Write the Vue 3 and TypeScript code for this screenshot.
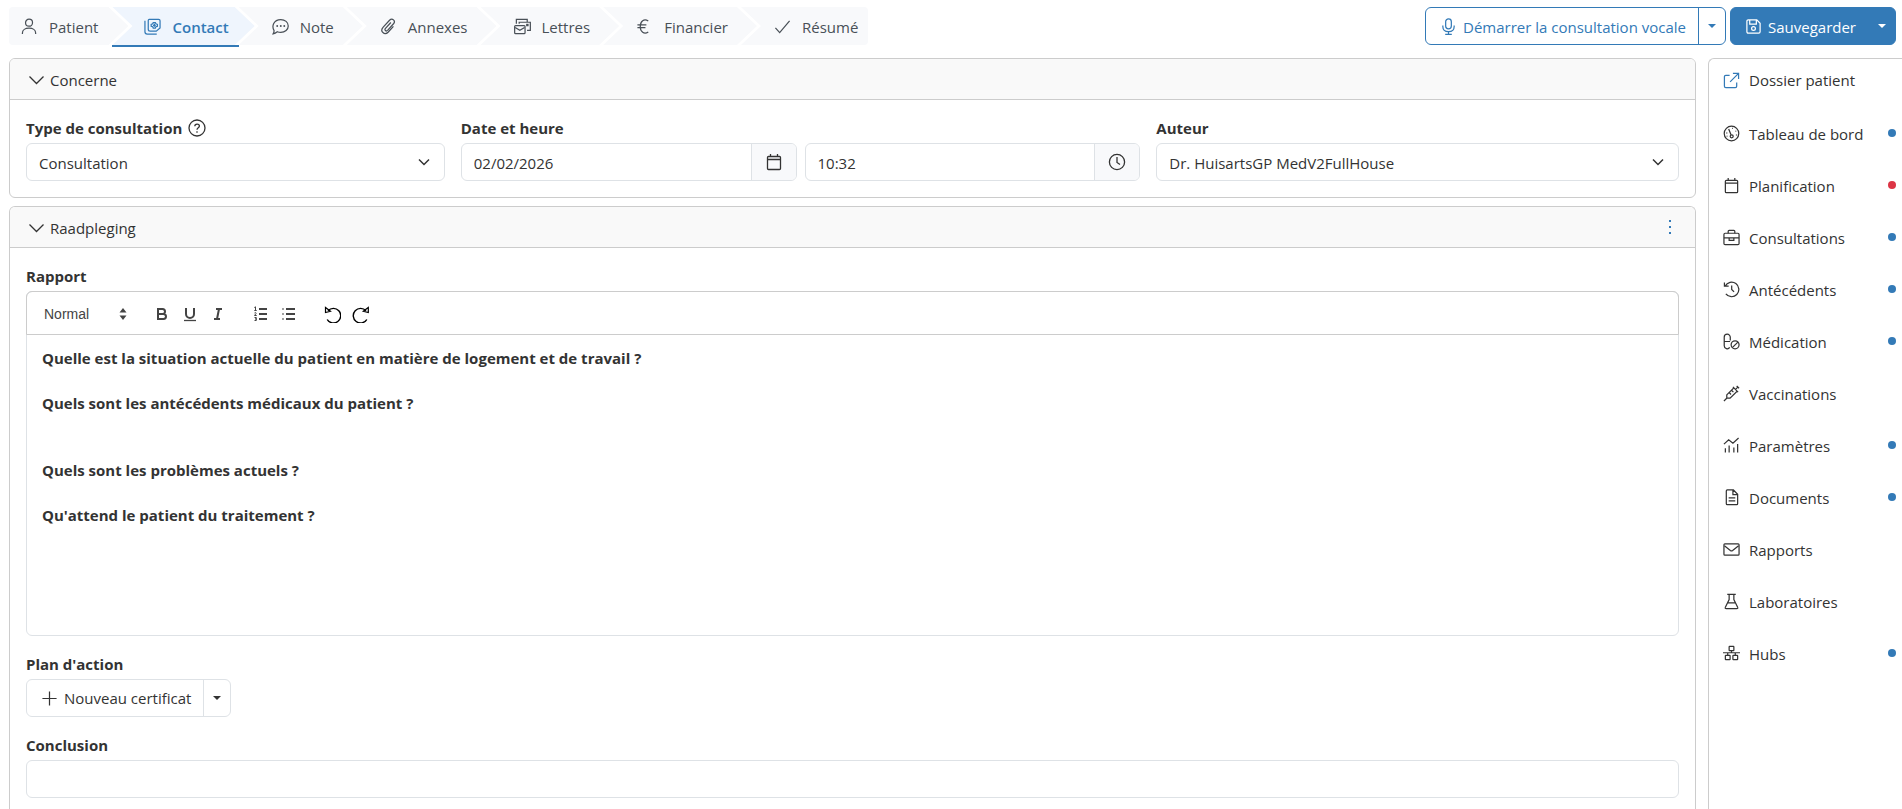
<script setup lang="ts">
import { ref } from 'vue'

interface Step { label: string; icon: string; active?: boolean }
interface SideItem { label: string; icon: string; dot?: 'blue' | 'red' }

// Icon bodies share an 18x18 grid and are drawn with the current text colour.
const icons: Record<string, string> = {
  person: '<circle cx="8.5" cy="5" r="3.7"/><path d="M1.5 17v-1.2c0-3 3-5 7-5s7 2 7 5V17"/>',
  contact: '<path d="M1 3v11.500q0 2.500 2.500 2.500h10"/><path d="M5.500 1.500h10q1.500 0 1.500 1.500v7.500l-4 3.500H6.500q-2 0-2-2V3q0-1.500 1-1.500z"/><path d="M9.800 4.800h2.200l.6 1.400 1.600.5v2l-1.600.5-.6 1.400H9.800l-.6-1.400-1.600-.5v-2l1.600-.5zM9.500 7.700h3M11 6.200v3"/>',
  chat: '<path d="M1.200 16.700c.8-1.200 1-2.300 1-3.300C-.5 9 1.500 1.600 9.300 1.600c4.500 0 7.900 3 7.900 6.800s-3.400 6.900-7.900 6.900c-1.400 0-2.600-.2-3.700-.7-1.100.9-2.500 1.800-4.400 2.100z"/><g fill="currentColor" stroke="none"><circle cx="5.500" cy="8.500" r="1"/><circle cx="9.300" cy="8.500" r="1"/><circle cx="13" cy="8.500" r="1"/></g>',
  clip: '<path d="M11.500 4.800 5.800 11c-1.500 1.700.6 3.700 2.200 2.100l6.300-7c2.700-3.200-1.400-6.600-4.200-3.700L3.400 9.600c-4 4.500 1.400 9.300 5.400 5.200l5.400-6"/>',
  letters: '<rect x="0.7" y="8" width="11" height="8.500" rx="1"/><path d="m1.200 10 5 3 5-3"/><path d="M2.500 6V1.500h11.500V4M5.500 6V4.500h11.800v8.500h-3.500"/><rect x="13.500" y="6.800" width="1.300" height="1.300"/>',
  euro: '<path d="M13 3.200C8.500.3 4.500 3.500 4.500 9s4 8.700 8.500 5.800M1.500 7.300H11M1.500 10.300h8.500"/>',
  check: '<path d="m1.500 10.500 4.500 5L16.500 3"/>',
  mic: '<rect x="6" y="1" width="6" height="10.500" rx="3"/><path d="M3 8v1c0 3.500 2.500 5.500 6 5.500s6-2 6-5.500V8M9 14.500v2.800M5.500 17.300h7"/>',
  save: '<path d="M3.500 2h9L16 5.500v9q0 1.500-1.500 1.500h-11Q2 16 2 14.500v-11Q2 2 3.500 2z"/><path d="M5 2v4.500h7V2"/><circle cx="9" cy="11.200" r="2"/>',
  chevron: '<path d="m1.500 6.500 7 7 7-7"/>',
  help: '<circle cx="9" cy="9" r="8"/><path d="M6.800 7.300c0-3 4.600-2.800 4.600-.2 0 1.800-2.400 1.700-2.400 3.700M9 12.200v1.500"/>',
  calendar: '<path d="M3.500 3.500h11q1 0 1 1v11q0 1-1 1h-11q-1 0-1-1v-11q0-1 1-1zM2.500 6.500h13M5.500 1v2.500M12.500 1v2.500"/>',
  clock: '<circle cx="9" cy="9" r="7.600"/><path d="M9 4v5.500l3 2"/>',
  external: '<path d="M7 3.500H3q-1.500 0-1.500 1.500v10q0 1.500 1.500 1.500h10q1.500 0 1.500-1.500v-4M7.500 10.500l9-9M10.500 1.500h6v6"/>',
  gauge: '<circle cx="9" cy="9" r="7.700"/><circle cx="9.200" cy="12" r="1.600"/><path d="m8.500 10.300-2.500-6M9.800 3.500h.8M13.500 6v1M14.300 10v1M4 8v1M4.300 11.500v.8"/>',
  briefcase: '<rect x="1" y="4.500" width="16" height="12" rx="1.200"/><path d="M5.500 4.500V2.500q0-1 1-1h5q1 0 1 1v2M1 9.500h5.500M11.500 9.500H17M6.500 9.500h5V12h-5z"/>',
  history: '<path d="M2.300 5.300A7.700 7.700 0 1 1 3 13.700M1.500 1.500v4h4.500M9.200 4.800V9l2.500 2.500"/>',
  pills: '<path d="M7.700 8V4.500a3.200 3.200 0 0 0-6.400 0v9c0 3.300 4.200 4.200 5.800 1.800M1.300 9h6.200"/><circle cx="12.800" cy="12.500" r="4.200"/><path d="m15.800 9.600-6 5.900"/>',
  syringe: '<path d="m1 17 3.200-3.200M4 10.500l7.500-7.500 3.500 3.500L7.500 14H4zM10.500 2l5.500 5.500M13.300 4.700l2.700-2.700M14.500 1l2.500 2.500M9 5.500l2 2M6.500 8l2 2"/>',
  chart: '<path d="M2.500 16.500V12M6.500 16.500V9M11.500 16.500V11M15.500 16.500V7.500M1 7.500l5-4.500 4.500 3.500L16.500 1"/>',
  document: '<path d="M4.500 1h6.500l4.500 4.500v10q0 1-1 1h-10q-1 0-1-1v-13.500q0-1 1-1zM10.500 1v5h5M6 9.500h7M6 12.500h7"/>',
  mail: '<rect x="1" y="3" width="16" height="12" rx="1"/><path d="m1.500 5 6.300 5q1.200.9 2.400 0l6.300-5"/>',
  flask: '<path d="M4.500 1.500h9M6.500 1.500V7l-4 8q-.8 1.500 1 1.500h11q1.800 0 1-1.500l-4-8V1.500M5 10.500h8"/>',
  hub: '<rect x="6.500" y="1.500" width="5" height="4.500" rx=".5"/><path d="M0 8.200h18M9 6v2M5 8v2.500M13 8v2.500"/><rect x="2.500" y="11" width="5" height="4.500" rx=".5"/><rect x="10.500" y="11" width="5" height="4.500" rx=".5"/>',
  plus: '<path d="M9 1.500v15M1.500 9h15"/>',
  dots: '<g fill="currentColor" stroke="none"><rect x="8" y="2" width="2" height="2"/><rect x="8" y="8" width="2" height="2"/><rect x="8" y="14" width="2" height="2"/></g>',
  bold: '<g stroke-width="2"><path d="M5 4h4.500a2.500 2.500 0 0 1 0 5H5zM5 9h5.500a2.500 2.500 0 0 1 0 5H5z"/></g>',
  underline: '<path stroke-width="2" d="M5 3v6a4 4 0 0 0 8 0V3"/><path d="M3 15.500h12"/>',
  italic: '<path stroke-width="2" d="M7 4h6M5 14h6M8 14l2-10"/>',
  ordered: '<path stroke-width="2" d="M7 4h8M7 9h8M7 14h8"/><path stroke-width="1" d="m2.300 2.500 1.200-.700v3.700M2.300 5.500h2.400M2.500 8c.8-.9 2-.3 1.500.6L2.500 10.500h2.200M2.500 12.500h1.800v1.400h-1 1v1.600H2.500"/>',
  bullet: '<path stroke-width="2" d="M6 4h9M6 9h9M6 14h9M2.500 4h1M2.500 9h1M2.500 14h1"/>',
  undo: '<path stroke-width="1.400" d="M5 5.800A7.300 7.300 0 1 1 4.200 14.500"/><path d="M2.500 2.500v5l5-1.200z" stroke-width="1.200"/>',
  redo: '<path stroke-width="1.400" d="M15 5.800A7.300 7.300 0 1 0 15.800 14.500"/><path d="M17.300 2.500v5l-5-1.200z" stroke-width="1.200"/>',
  sort: '<path fill="currentColor" stroke="none" d="M5.500 7.500h7L9 3zM5.500 10.500h7L9 15z"/>',
}

const steps: Step[] = [
  { label: 'Patient', icon: 'person' },
  { label: 'Contact', icon: 'contact', active: true },
  { label: 'Note', icon: 'chat' },
  { label: 'Annexes', icon: 'clip' },
  { label: 'Lettres', icon: 'letters' },
  { label: 'Financier', icon: 'euro' },
  { label: 'Résumé', icon: 'check' },
]

const sideItems: SideItem[] = [
  { label: 'Tableau de bord', icon: 'gauge', dot: 'blue' },
  { label: 'Planification', icon: 'calendar', dot: 'red' },
  { label: 'Consultations', icon: 'briefcase', dot: 'blue' },
  { label: 'Antécédents', icon: 'history', dot: 'blue' },
  { label: 'Médication', icon: 'pills', dot: 'blue' },
  { label: 'Vaccinations', icon: 'syringe' },
  { label: 'Paramètres', icon: 'chart', dot: 'blue' },
  { label: 'Documents', icon: 'document', dot: 'blue' },
  { label: 'Rapports', icon: 'mail' },
  { label: 'Laboratoires', icon: 'flask' },
  { label: 'Hubs', icon: 'hub', dot: 'blue' },
]

const toolGroups = [
  [
    { icon: 'bold', label: 'Gras' },
    { icon: 'underline', label: 'Souligné' },
    { icon: 'italic', label: 'Italique' },
  ],
  [
    { icon: 'ordered', label: 'Liste numérotée' },
    { icon: 'bullet', label: 'Liste à puces' },
  ],
  [
    { icon: 'undo', label: 'Annuler' },
    { icon: 'redo', label: 'Rétablir' },
  ],
]

const date = ref('02/02/2026')
const time = ref('10:32')
const conclusion = ref('')
</script>

<template>
  <div class="page">
    <header class="topbar">
      <nav aria-label="Étapes">
        <ol class="steps">
          <li v-for="s in steps" :key="s.label" class="step" :class="{ active: s.active }">
            <a href="#" :aria-current="s.active ? 'step' : undefined">
              <svg class="icon" viewBox="0 0 18 18" aria-hidden="true" v-html="icons[s.icon]"></svg>
              <span class="caption">{{ s.label }}</span>
            </a>
          </li>
        </ol>
      </nav>
      <div class="actions">
        <div class="split outline">
          <button type="button" class="main">
            <svg class="icon" viewBox="0 0 18 18" aria-hidden="true" v-html="icons.mic"></svg>
            <span class="caption">Démarrer la consultation vocale</span>
          </button>
          <button type="button" class="more" aria-label="Options vocales"><span class="caret"></span></button>
        </div>
        <div class="split solid">
          <button type="button" class="main">
            <svg class="icon" viewBox="0 0 18 18" aria-hidden="true" v-html="icons.save"></svg>
            <span class="caption">Sauvegarder</span>
          </button>
          <button type="button" class="more" aria-label="Options de sauvegarde"><span class="caret"></span></button>
        </div>
      </div>
    </header>

    <div class="body">
      <main class="content">
        <section class="card">
          <div class="card-head">
            <button type="button" class="toggle" aria-expanded="true">
              <svg class="icon" viewBox="0 0 18 18" aria-hidden="true" v-html="icons.chevron"></svg>
              <span class="caption">Concerne</span>
            </button>
          </div>
          <div class="card-body fields">
            <div class="field">
              <div class="label-row">
                <label for="type">Type de consultation</label>
                <svg class="icon" viewBox="0 0 18 18" aria-hidden="true" v-html="icons.help"></svg>
              </div>
              <div class="select">
                <select id="type"><option>Consultation</option></select>
                <svg class="arrow" viewBox="0 0 12 12" aria-hidden="true"><path d="m1 3.500 5 5 5-5" /></svg>
              </div>
            </div>
            <div class="field">
              <div class="label-row"><label for="date">Date et heure</label></div>
              <div class="pair">
                <div class="group">
                  <input id="date" v-model="date" type="text" />
                  <button type="button" aria-label="Choisir la date">
                    <svg class="icon" viewBox="0 0 18 18" aria-hidden="true" v-html="icons.calendar"></svg>
                  </button>
                </div>
                <div class="group">
                  <input v-model="time" type="text" aria-label="Heure" />
                  <button type="button" aria-label="Choisir l'heure">
                    <svg class="icon" viewBox="0 0 18 18" aria-hidden="true" v-html="icons.clock"></svg>
                  </button>
                </div>
              </div>
            </div>
            <div class="field">
              <div class="label-row"><label for="author">Auteur</label></div>
              <div class="select">
                <select id="author"><option>Dr. HuisartsGP MedV2FullHouse</option></select>
                <svg class="arrow" viewBox="0 0 12 12" aria-hidden="true"><path d="m1 3.500 5 5 5-5" /></svg>
              </div>
            </div>
          </div>
        </section>

        <section class="card last">
          <div class="card-head">
            <button type="button" class="toggle" aria-expanded="true">
              <svg class="icon" viewBox="0 0 18 18" aria-hidden="true" v-html="icons.chevron"></svg>
              <span class="caption">Raadpleging</span>
            </button>
            <button type="button" class="menu" aria-label="Menu">
              <svg class="icon" viewBox="0 0 18 18" aria-hidden="true" v-html="icons.dots"></svg>
            </button>
          </div>
          <div class="card-body stack">
            <div class="field">
              <div class="label-row"><span id="report-label" class="label">Rapport</span></div>
              <div class="editor">
                <div class="toolbar" role="toolbar" aria-label="Mise en forme">
                  <div class="format">
                    <select aria-label="Style de texte"><option>Normal</option></select>
                    <svg class="tool-icon" viewBox="0 0 18 18" aria-hidden="true" v-html="icons.sort"></svg>
                  </div>
                  <div v-for="(g, i) in toolGroups" :key="i" class="tools" :class="{ dark: i === 2 }">
                    <button v-for="t in g" :key="t.icon" type="button" :aria-label="t.label">
                      <svg class="tool-icon" viewBox="0 0 18 18" aria-hidden="true" v-html="icons[t.icon]"></svg>
                    </button>
                  </div>
                </div>
                <div class="text" role="textbox" aria-multiline="true" aria-labelledby="report-label" contenteditable="true">
                  <p>Quelle est la situation actuelle du patient en matière de logement et de travail ?</p>
                  <p class="blank"><br /></p>
                  <p>Quels sont les antécédents médicaux du patient ?</p>
                  <p class="blank"><br /></p>
                  <p class="blank"><br /></p>
                  <p>Quels sont les problèmes actuels ?</p>
                  <p class="blank"><br /></p>
                  <p>Qu'attend le patient du traitement ?</p>
                </div>
              </div>
            </div>
            <div class="field">
              <div class="label-row"><span class="label">Plan d'action</span></div>
              <div class="split plain">
                <button type="button" class="main">
                  <svg class="icon" viewBox="0 0 18 18" aria-hidden="true" v-html="icons.plus"></svg>
                  <span>Nouveau certificat</span>
                </button>
                <button type="button" class="more" aria-label="Autres actions"><span class="caret"></span></button>
              </div>
            </div>
            <div class="field">
              <div class="label-row"><label for="conclusion">Conclusion</label></div>
              <div class="group"><input id="conclusion" v-model="conclusion" type="text" /></div>
            </div>
          </div>
        </section>
      </main>

      <aside class="side">
        <a href="#" class="side-link patient">
          <svg class="icon" viewBox="0 0 18 18" aria-hidden="true" v-html="icons.external"></svg>
          <span>Dossier patient</span>
        </a>
        <nav aria-label="Dossier">
          <a v-for="item in sideItems" :key="item.label" href="#" class="side-link">
            <svg class="icon" viewBox="0 0 18 18" aria-hidden="true" v-html="icons[item.icon]"></svg>
            <span class="caption">{{ item.label }}</span>
            <span v-if="item.dot" class="dot" :class="item.dot"></span>
          </a>
        </nav>
      </aside>
    </div>
  </div>
</template>

<style>
body {
  margin: 0;
  background: #fff;
}
</style>

<style scoped>
* {
  box-sizing: border-box;
}

.page {
  display: flex;
  flex-direction: column;
  height: 100vh;
  overflow: hidden;
  color: #333;
  font: 15px/24px "Segoe UI", "Open Sans", "Noto Sans", sans-serif;
}

button,
input,
select {
  margin: 0;
  padding: 0;
  border: 0;
  background: none;
  color: inherit;
  font: inherit;
  appearance: none;
}

a {
  color: inherit;
  text-decoration: none;
}

.icon,
.tool-icon,
.arrow {
  flex: none;
  width: 18px;
  height: 18px;
  fill: none;
  stroke: currentColor;
  stroke-width: 1.3;
}

.caption {
  padding-top: 2px;
}

.topbar {
  display: flex;
  flex: none;
  justify-content: space-between;
  padding: 7px 6px 13px 9px;
}

.steps {
  display: flex;
  margin: 0;
  padding: 0;
  list-style: none;
  color: #495057;
}

.step {
  position: relative;
}

.step::before {
  content: "";
  position: absolute;
  inset: 0 -16px 0 0;
  background: #f8f9fb;
  clip-path: polygon(0 0, calc(100% - 20px) 0, 100% 50%, calc(100% - 20px) 100%, 0 100%, 20px 50%);
}

.step:first-child::before {
  border-radius: 4px 0 0 4px;
  clip-path: polygon(0 0, calc(100% - 20px) 0, 100% 50%, calc(100% - 20px) 100%, 0 100%);
}

.step:last-child::before {
  right: 0;
  border-radius: 0 4px 4px 0;
  clip-path: polygon(0 0, 100% 0, 100% 100%, 0 100%, 20px 50%);
}

.step a {
  position: relative;
  display: flex;
  align-items: center;
  gap: 11px;
  height: 38px;
  padding: 0 13px 0 33px;
}

.step .icon,
.split .icon,
.side .icon {
  width: 17px;
  height: 17px;
}

.step:first-child a {
  padding: 0 14px 0 12px;
}

.step:last-child a {
  padding-right: 10px;
}

.step.active {
  color: #337ab7;
  font-weight: 600;
}

.step.active a {
  padding: 0 10px 0 32px;
}

.step.active::before {
  background: #eff5fd;
}

.step.active::after {
  content: "";
  position: absolute;
  right: 0;
  bottom: -2px;
  left: 0;
  height: 2px;
  background: #337ab7;
}

.actions {
  display: flex;
  gap: 4px;
}

.split {
  display: inline-flex;
  height: 38px;
  border: 1px solid #dee2e6;
  border-radius: 6px;
}

.split .main {
  display: flex;
  align-items: center;
  gap: 6px;
  padding: 0 12px 0 14px;
}

.split .more {
  display: flex;
  align-items: center;
  justify-content: center;
  width: 27px;
  border-left: 1px solid #dee2e6;
}

.outline {
  border-color: #337ab7;
  color: #337ab7;
}

.outline .more {
  border-color: #337ab7;
}

.solid {
  border-color: #337ab7;
  background: #337ab7;
  color: #fff;
}

.solid .more {
  border-color: #337ab7;
}

.caret {
  border: 4px solid transparent;
  border-top-color: currentColor;
  border-bottom: 0;
}

.body {
  display: flex;
  flex: 1;
  gap: 12px;
  min-height: 0;
  padding-left: 9px;
}

.content {
  display: flex;
  flex: 1;
  flex-direction: column;
  gap: 8px;
  min-width: 0;
}

.card {
  border: 1px solid #ccc;
  border-radius: 6px;
}

.card.last {
  flex: 1;
  border-bottom: 0;
  border-radius: 6px 6px 0 0;
}

.card-head {
  display: flex;
  align-items: center;
  justify-content: space-between;
  height: 41px;
  padding: 0 16px;
  border-bottom: 1px solid #ccc;
  border-radius: 5px 5px 0 0;
  background: #f9f9f9;
}

.toggle {
  display: flex;
  align-items: center;
  gap: 4px;
  padding: 0 2px;
}

.menu {
  display: flex;
  color: #337ab7;
}

.card-body {
  padding: 16px;
}

.fields {
  display: grid;
  grid-template-columns: 419fr 680fr 523fr;
  gap: 16px;
}

.stack {
  display: flex;
  flex-direction: column;
  gap: 16px;
}

.label-row {
  display: flex;
  align-items: center;
  gap: 6px;
  height: 27px;
  padding-bottom: 3px;
}

label,
.label {
  font-weight: 700;
}

.select {
  position: relative;
}

.select select {
  display: block;
  width: 100%;
  height: 38px;
  padding: 2px 36px 0 12px;
  border: 1px solid #dee2e6;
  border-radius: 6px;
}

.arrow {
  position: absolute;
  top: 13px;
  right: 15px;
  width: 12px;
  height: 12px;
  stroke-width: 1.5;
  pointer-events: none;
}

.pair {
  display: grid;
  grid-template-columns: 1fr 1fr;
  gap: 8px;
}

.group {
  display: flex;
  height: 38px;
  overflow: hidden;
  border: 1px solid #dee2e6;
  border-radius: 6px;
}

.group input {
  flex: 1;
  min-width: 0;
  padding: 2px 12px 0;
}

.group button {
  display: flex;
  align-items: center;
  justify-content: center;
  width: 45px;
  border-left: 1px solid #dee2e6;
  background: #f8f9fb;
}

.editor {
  border: 1px solid #dee2e6;
  border-radius: 6px;
}

.toolbar {
  display: flex;
  align-items: center;
  gap: 15px;
  height: 44px;
  margin: -1px -1px 0;
  padding: 2px 8px 0;
  border: 1px solid #ccc;
  border-radius: 6px 6px 0 0;
  color: #444;
}

.format {
  display: flex;
  align-items: center;
  justify-content: space-between;
  width: 98px;
  height: 24px;
  padding: 0 1px 0 9px;
  font: 14px/24px "Liberation Sans", Arial, sans-serif;
}

.format select {
  flex: 1;
}

.tools {
  display: flex;
}

.tools button {
  display: flex;
  padding: 3px 5px;
}

.tools.dark {
  color: #000;
}

.text {
  height: 300px;
  padding: 12px 15px;
  font-weight: 700;
  line-height: 23px;
}

.text p {
  margin: 0;
}

.text .blank {
  line-height: 22px;
}

.side {
  flex: none;
  width: 194px;
  border-top: 1px solid #ccc;
  border-left: 1px solid #ccc;
  border-radius: 6px 0 0 0;
}

.side-link {
  display: flex;
  align-items: center;
  gap: 9px;
  height: 52px;
  padding: 0 6px 0 14px;
}

.side-link.patient {
  height: 48px;
  padding-bottom: 6px;
}

.side-link.patient .icon {
  color: #337ab7;
}

.dot {
  width: 8px;
  height: 8px;
  margin-left: auto;
  border-radius: 50%;
  background: #337ab7;
}

.dot.red {
  background: #dc3545;
}
</style>
